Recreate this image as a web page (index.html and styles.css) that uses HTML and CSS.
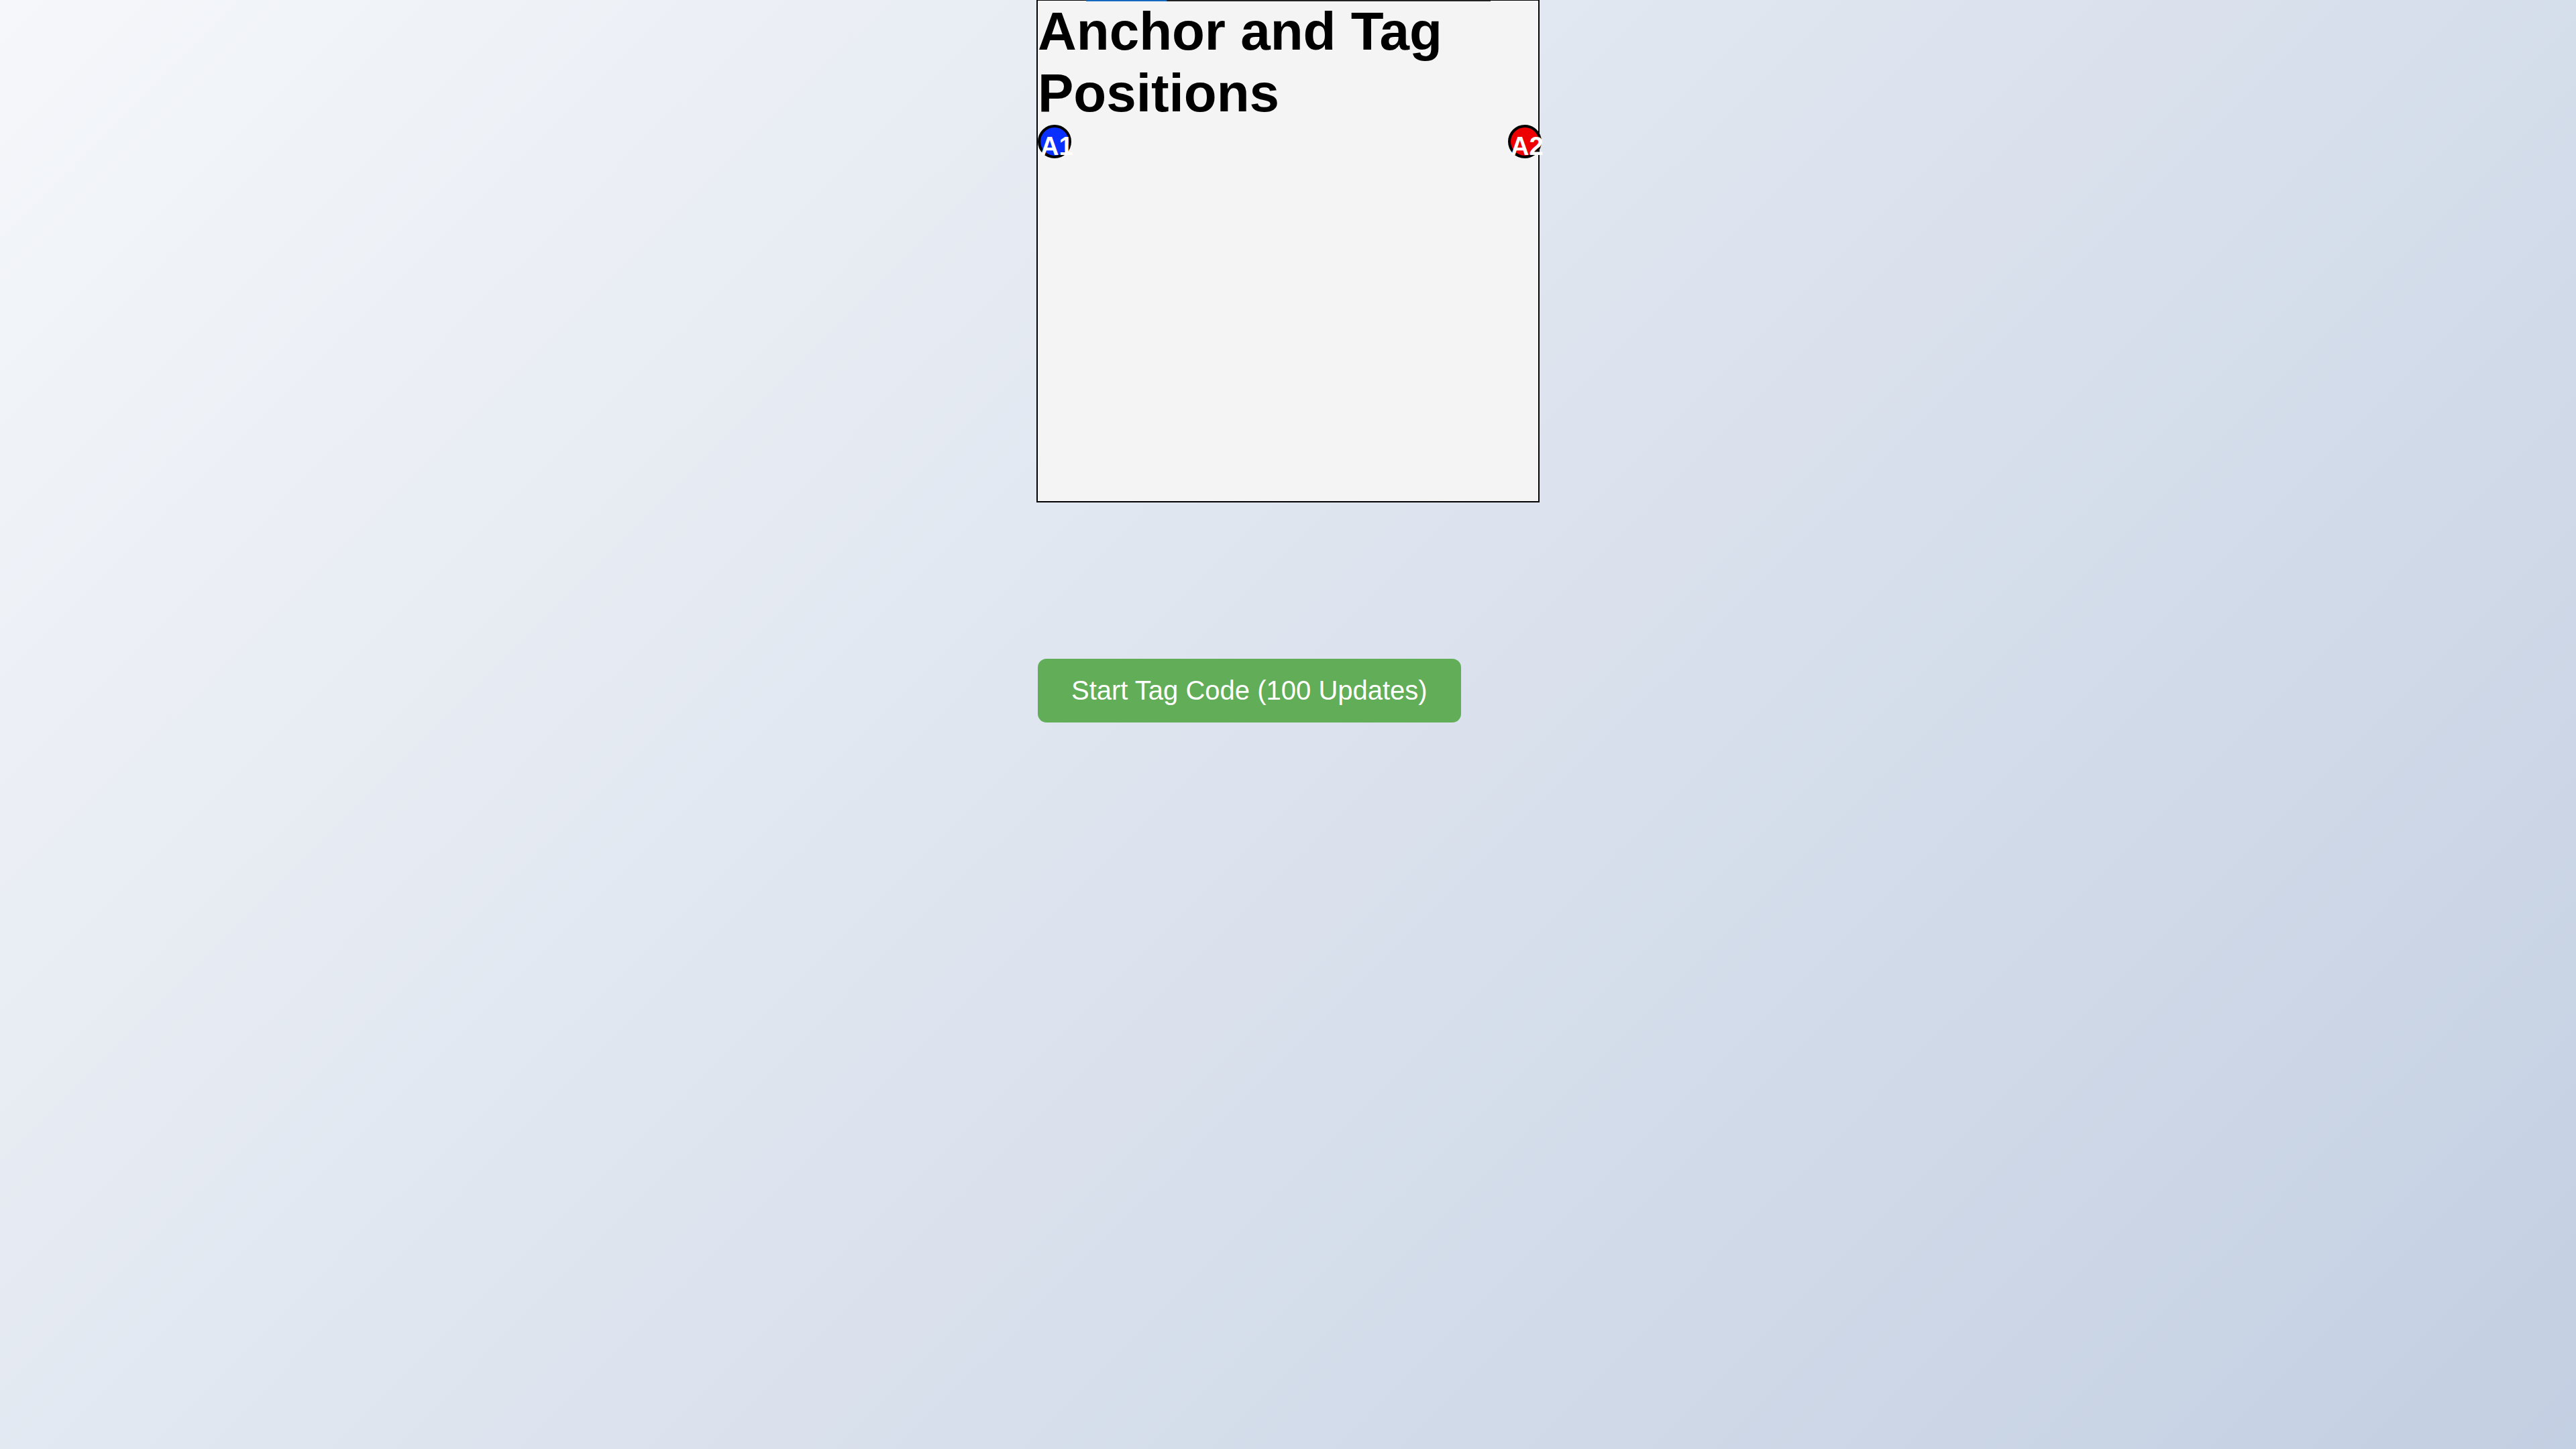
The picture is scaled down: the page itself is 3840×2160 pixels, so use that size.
FILE: index.html
```html
<!DOCTYPE html>
<html lang="en">
<head>
<meta charset="utf-8">
<title>Anchor and Tag Positions</title>
<link rel="stylesheet" href="styles.css">
</head>
<body>
  <main class="page">
    <section class="area">
      <div class="progress"><div class="progress-fill"></div></div>
      <h1 class="title">Anchor and Tag Positions</h1>
      <div class="anchor anchor-blue" style="left: 0px;">A1</div>
      <div class="anchor anchor-red" style="left: 701px;">A2</div>
    </section>
    <div class="controls">
      <button class="start-btn" type="button">Start Tag Code (100 Updates)</button>
    </div>
  </main>
</body>
</html>
```

FILE: styles.css
```css
html, body {
  margin: 0;
  padding: 0;
}

body {
  min-height: 100vh;
  background: linear-gradient(135deg, #f5f7fa 0%, #c3cfe2 100%);
  font-family: "Liberation Sans", Arial, sans-serif;
}

.page {
  width: 750px;
  margin: -1px auto 0;
  display: flex;
  flex-direction: column;
  align-items: flex-start;
}

.area {
  position: relative;
  box-sizing: border-box;
  width: 750px;
  height: 750px;
  border: 2px solid #000;
  background: #f4f4f4;
}

.progress {
  position: absolute;
  top: -1px;
  left: 72px;
  width: 603px;
  height: 2px;
  background: #222;
}

.progress-fill {
  width: 120px;
  height: 100%;
  background: #1669c1;
}

.title {
  margin: 0;
  font-size: 80px;
  font-weight: bold;
  line-height: 92px;
  color: #000;
}

.anchor {
  position: absolute;
  top: 185px;
  width: 42px;
  height: 42px;
  border: 4px solid #000;
  border-radius: 50%;
  color: #fff;
  font-size: 38px;
  font-weight: bold;
  line-height: 56px;
  white-space: nowrap;
}

.anchor-blue {
  background: #0a30ff;
}

.anchor-red {
  background: #ee0000;
}

.controls {
  margin-top: 233px;
  padding-left: 2px;
}

.start-btn {
  font-family: "Liberation Sans", Arial, sans-serif;
  font-size: 40px;
  line-height: 46px;
  color: #fff;
  background: #62ad57;
  border: none;
  border-radius: 13px;
  padding: 24px 50px 25px;
  cursor: pointer;
}
```
